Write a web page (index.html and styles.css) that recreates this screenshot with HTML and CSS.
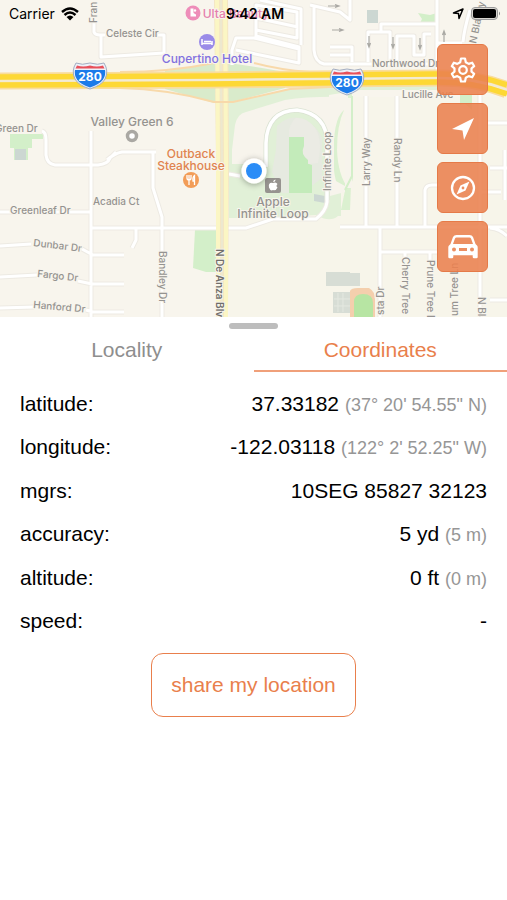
FILE: index.html
```html
<!DOCTYPE html>
<html lang="en">
<head>
<meta charset="utf-8">
<meta name="viewport" content="width=device-width, initial-scale=1">
<title>My location</title>
<link rel="stylesheet" href="styles.css">
</head>
<body>
<main class="app">
  <section class="map" aria-label="Map">
    <svg class="map-canvas" viewBox="0 0 507 317" preserveAspectRatio="xMidYMid slice">
      <defs>
        <filter id="shadow" x="-50%" y="-50%" width="200%" height="200%">
          <feDropShadow dx="0" dy="1" stdDeviation="3" flood-color="#000" flood-opacity=".35"/>
        </filter>
        <g id="shield">
          <path d="M-14-13Q-8-10.500 0-13Q8-10.500 14-13Q19-5 15 3Q12 9 0 13Q-12 9-15 3Q-19-5-14-13Z" fill="#eef1f8" stroke="#a3adc2" stroke-width="1"/>
          <path d="M-13-10.500Q-7-8.500 0-10.500Q7-8.500 13-10.500L14.500-7.500H-14.500Z" fill="#e8505a"/>
          <path d="M-15-6H15Q16-1 13 3.500Q10 8 0 11.500Q-10 8-13 3.500Q-16-1-15-6Z" fill="#1b7bea"/>
          <text class="shield-text" x="0" y="5">280</text>
        </g>
        <g id="walk-arrow"><path d="M-6 0H4M1-1.500L5 0L1 1.500" fill="none" stroke="#aaa9a4" stroke-width="1.200"/></g>
      </defs>
      <rect width="507" height="317" fill="#f8f5ed"/>
      <path d="M229 97H507V317H229Z" fill="#f7f5ea"/>

      <!-- parks and verges -->
      <g fill="#d3efc9">
        <path d="M10 134H43V139H32V148H28V160H14V148H10Z"/>
        <path d="M165 71Q190 67 216 63H229L262 68L285 72V88L228 103H214L165 89Z" fill="#d9ebcb"/>
        <path d="M228 103L290 89L350 86H437V90H360L329 95V188H341V216H338Q330 223 316 215L300 216L262 218H229Z" fill="#e1f0d7"/>
        <path d="M195 230H216V272H206L193 268Z"/>
        <path d="M418 13L430 15L437 13V24L430 22L419 25L422 19Z"/>
        <path d="M460 94H472V110L465 104L460 105Z"/>
        <path d="M348 93H352V160L350 210H341L348 176Z" opacity=".8"/>
        <path d="M340 108Q334 118 333 135V160Q335 188 342 192Q354 186 353 174Q346 172 348 188Q338 175 337 150Q337 125 344 110Z" opacity=".8"/>
      </g>
      <path d="M235 125Q237 114 246 112L285 100Q310 96 348 97L349 108Q336 110 334 140V180L345 186V192L330 196V150Q326 112 297 110Q270 112 266 140V164H232V150Z" fill="#f7f4ec"/>
      <path d="M345 98H352V188H345Z" fill="#f7f4ec"/>
      <path d="M352 96V176L345 190" fill="none" stroke="#d3efc9" stroke-width="2"/>
      <path d="M277 126Q290 113 306 120Q318 128 322 138V178Q312 186 302 193H282L272 172L276 150Z" fill="#e6eae0"/>
      <path d="M289 136H304V146H309V164L312 165V193H289Z" fill="#c3ebba"/>
      <path d="M296 118Q307 117 315 128Q323 139 318 163L308 164V160Q300 154 304 146V137H289Q288 124 296 118Z" fill="#ebebe4"/>
      <path d="M350 291Q351 288 358 288H369Q375 291 375 300V317H350Z" fill="#f4cfad"/>
      <path d="M354 317V302Q354 294 363 294Q373 294 373 303V317Z" fill="#b7e5a3"/>
      <g fill="#d7ddd5">
        <path d="M15 149H26V160H15ZM367 10H378V23H367ZM314 194L325 196V203L314 201Z" fill="#ccd7d2"/>
        <path d="M326 272H350V273H360V286H326ZM333 292H350V313H333Z"/>
        <path d="M338 293V312M343 293V312M334 299H350M334 306H350" stroke="#e4e8e0" stroke-width="1"/>
      </g>

      <!-- side streets -->
      <g class="street-edge">
        <path id="roads" d="M94 20V32Q95 35 100 35H105M101 35V57L164 53V35H158M91 131V317M0 212H91M91 228H246L273 219H316Q326 211 327 202V190M42 131Q46 132 46 140V155Q47 164 55 165H98Q108 164 110 158L116 152M107 160Q115 153 122 152H156M153 153V188L162 217V317M136 228V240L132 248M0 246L31 244M82 249L93 255H124M0 277L37 275M78 281L92 284H124M0 308L34 307M86 310L93 312H124M229 174L240 176M340 227H507M366 96V227M397 96V227M380 227V317M380 252H438M405 252V260M430 252V260M425 227V190Q426 185 432 185H440M480 77V317M488 123H507M490 168H507M480 192H501M490 228Q500 229 507 236M490 300H507M505 150V200M470 10Q464 30 463 42"/>
        <path id="roads-north" d="M232 65V50L236 38H254L299 49V61M236 50L299 63V47L256 36V5L297 12V38L256 30M256 18L298 27M260 0L301 9V45M310 5L340 12L350 20V0M314 6V50Q315 62 324 64H432M330 47H352V62M330 55H352M368 62V32H390V62M381 32V24H437V0M397 62V36H414V55H424V34H431M437 13V70M462 43H437"/>
      </g>
      <use href="#roads" class="street"/>
      <use href="#roads-north" class="street"/>
      <path d="M266 167V143Q267 111 297 110Q327 114 327 143V200" fill="none" stroke="#dbe3d3" stroke-width="5"/>
      <path d="M266 167V143Q267 111 297 110Q327 114 327 143V200" fill="none" stroke="#fff" stroke-width="3.500"/>
      <g>
        <use href="#walk-arrow" x="334" y="6"/><use href="#walk-arrow" x="338" y="30"/>
        <use href="#walk-arrow" transform="translate(369 42) rotate(90)"/>
        <use href="#walk-arrow" transform="translate(393 43) rotate(90)"/>
        <use href="#walk-arrow" transform="translate(420 44) rotate(90)"/>
        <use href="#walk-arrow" transform="translate(444 36) rotate(-90)"/>
      </g>

      <!-- De Anza Blvd -->
      <path d="M214 0L216 155L216 317H228L229 155L228 0Z" fill="#f4e6c3"/>
      <path d="M217 0L218 155L218 317M225 0L226 155L226 317" fill="none" stroke="#fbf6c4" stroke-width="4"/>
      <path d="M221 0V90L222 155V317" fill="none" stroke="#ede8cf" stroke-width="2"/>

      <!-- Interstate 280 with ramps -->
      <path d="M120 72Q170 72 214 63M120 88Q168 89 214 102H233L290 89L350 86M254 63Q280 70 310 72" fill="none" stroke="#f8d9aa" stroke-width="2"/>
      <g fill="none">
        <path d="M0 81L210 80L437 78Q475 77 507 90" stroke="#f9dc9c" stroke-width="17"/>
        <path d="M0 81L210 80L437 78Q475 77 507 90" stroke="#f3ead2" stroke-width="3"/>
        <path d="M0 77L210 76L437 74Q475 73 507 85M0 85L210 84L437 82Q475 82 507 94" stroke="#fdd835" stroke-width="5.500"/>
      </g>
      <use href="#shield" x="90" y="76"/>
      <use href="#shield" x="347" y="82"/>

      <!-- street names -->
      <g class="road-name">
        <text x="106" y="37">Celeste Cir</text>
        <text x="-5" y="132">Green Dr</text>
        <text x="10" y="214">Greenleaf Dr</text>
        <text x="93" y="205">Acadia Ct</text>
        <text transform="translate(33 246) rotate(7)">Dunbar Dr</text>
        <text transform="translate(37 277) rotate(6)">Fargo Dr</text>
        <text transform="translate(33 308) rotate(5)">Hanford Dr</text>
        <text x="372" y="67">Northwood Dr</text>
        <text x="402" y="98">Lucille Ave</text>
        <text transform="translate(97 23) rotate(-90)">Fran</text>
        <text transform="translate(159 251) rotate(90)">Bandley Dr</text>
        <text transform="translate(331 191) rotate(-90)">Infinite Loop</text>
        <text transform="translate(370 186) rotate(-90)">Larry Way</text>
        <text transform="translate(394 138) rotate(90)">Randy Ln</text>
        <text transform="translate(402 257) rotate(90)">Cherry Tree</text>
        <text transform="translate(427 260) rotate(90)">Prune Tree Ln</text>
        <text transform="translate(458 316) rotate(-90)">um Tree Ln</text>
        <text transform="translate(384 315) rotate(-90)">sta Dr</text>
        <text transform="translate(478 297) rotate(90)">N Blaney</text>
        <text transform="translate(476 44) rotate(-78)">N Blaney</text>
        <text class="major" transform="translate(216 249) rotate(90)">N De Anza Blvd</text>
      </g>

      <!-- places -->
      <g class="place">
        <text x="132" y="126">Valley Green 6</text>
        <text x="273" y="206">Apple</text>
        <text x="273" y="218">Infinite Loop</text>
        <text class="food" x="191" y="158">Outback</text>
        <text class="food" x="191" y="170">Steakhouse</text>
        <text class="hotel" x="207" y="63">Cupertino Hotel</text>
        <text class="shop" x="236" y="18">Ulta Beauty</text>
      </g>
      <circle cx="132" cy="136" r="4.500" fill="#fff" stroke="#aaa8a3" stroke-width="3.500"/>
      <circle cx="193" cy="13" r="7.500" fill="#ee8db9"/>
      <path d="M190.500 8.500V16.500H196V14.500L193.500 13V8.500Z" fill="#fff"/>
      <circle cx="195" cy="10.500" r="1.200" fill="#fff"/>
      <circle cx="207" cy="42" r="8" fill="#9a8be8"/>
      <path d="M202 39V45M202 43.500H212M212 41V45M204 41.500H211" stroke="#fff" stroke-width="1.500"/>
      <circle cx="191" cy="180" r="8" fill="#f29d58"/>
      <path d="M187 175V178Q187 180 189 180Q191 180 191 178V175M189 175V185M194.500 185V175.500Q192.500 177 193 181H194.500" fill="none" stroke="#fff" stroke-width="1.300"/>
      <rect x="265" y="178" width="16" height="15" rx="2" fill="#96938f"/>
      <path d="M273 182Q273.500 179.500 275.500 179.500Q275.500 182 273 182ZM273 183Q276 181.500 277.500 184Q275.500 186 277.500 187.500Q276 191 273 190Q270.500 191.500 269 187.500Q268 182 273 183Z" fill="#fff"/>
      <circle cx="254" cy="171" r="12.500" fill="#fff" filter="url(#shadow)"/>
      <circle cx="254" cy="171" r="8" fill="#2b8df7"/>
    </svg>

    <header class="status">
      <div class="carrier">
        <span>Carrier</span>
        <svg width="18" height="14" viewBox="0 0 18 14" aria-hidden="true">
          <path d="M1 5Q9-2 17 5M3.500 8Q9 3 14.500 8" fill="none" stroke="#000" stroke-width="2.400"/>
          <path d="M5.500 10Q9 7 12.500 10L9 13.500Z"/>
        </svg>
      </div>
      <time class="clock">9:42 AM</time>
      <div class="indicators">
        <svg width="13" height="13" viewBox="0 0 13 13" aria-hidden="true">
          <path d="M1.500 6L11 2L7 11.500L6.500 6.500Z" fill="none" stroke="#000" stroke-width="1.500" stroke-linejoin="round"/>
        </svg>
        <svg width="30" height="14" viewBox="0 0 30 14" aria-hidden="true">
          <rect x=".5" y=".5" width="26" height="12" rx="3.500" fill="#d8d6d0" stroke="#999"/>
          <rect x="2" y="2" width="23" height="9" rx="2"/>
          <path d="M28 4.500Q30 6.500 28 8.500Z" fill="#888"/>
        </svg>
      </div>
    </header>

    <nav class="tools" aria-label="Map tools">
      <button class="tool" type="button" aria-label="Settings">
        <svg viewBox="0 0 32 32" aria-hidden="true" fill="none" stroke="#fff" stroke-width="2.200" stroke-linejoin="round">
          <path d="M14 4.500H18L18.800 8.200L21.700 9.900L25.200 8.700L27.200 12.200L24.500 14.300V17.700L27.200 19.800L25.200 23.300L21.700 22.100L18.800 23.800L18 27.500H14L13.200 23.800L10.300 22.100L6.800 23.300L4.800 19.800L7.500 17.700V14.300L4.800 12.200L6.800 8.700L10.300 9.900L13.200 8.200Z"/>
          <circle cx="16" cy="16" r="3.800"/>
        </svg>
      </button>
      <button class="tool" type="button" aria-label="Center on my location">
        <svg viewBox="0 0 32 32" aria-hidden="true"><path d="M27 5L17 27L15.500 17.500L5 16Z" fill="#fff"/></svg>
      </button>
      <button class="tool" type="button" aria-label="Compass">
        <svg viewBox="0 0 32 32" aria-hidden="true">
          <circle cx="16" cy="16" r="11" fill="none" stroke="#fff" stroke-width="2.300"/>
          <path fill-rule="evenodd" d="M22.500 9.500L18.500 18.500L9.500 22.500L13.500 13.500ZM16 14.600A1.400 1.400 0 1 0 16 17.400A1.400 1.400 0 1 0 16 14.600Z" fill="#fff"/>
        </svg>
      </button>
      <button class="tool" type="button" aria-label="Directions">
        <svg viewBox="0 0 32 32" aria-hidden="true">
          <path fill-rule="evenodd" d="M9.500 4H22.500Q25 4 26 6L28.500 13L30 14.500Q30.700 15 30.700 16.500V26Q30.700 27.300 29.400 27.300H27Q25.700 27.300 25.700 26V24.300H6.300V26Q6.300 27.300 5 27.300H2.600Q1.300 27.300 1.300 26V16.500Q1.300 15 2 14.500L3.500 13L6 6Q7 4 9.500 4ZM9.500 6.500Q8.500 6.500 8 7.500L6 13H26L24 7.500Q23.500 6.500 22.500 6.500ZM7 16.500A2 2 0 1 0 7 20.500A2 2 0 1 0 7 16.500ZM25 16.500A2 2 0 1 0 25 20.500A2 2 0 1 0 25 16.500ZM12 17V20H20V17Z" fill="#fff"/>
        </svg>
      </button>
    </nav>
  </section>

  <section class="panel">
    <div class="handle"></div>
    <div class="tabs" role="tablist">
      <button class="tab" type="button" role="tab" aria-selected="false">Locality</button>
      <button class="tab active" type="button" role="tab" aria-selected="true">Coordinates</button>
    </div>
    <table class="readings">
      <tbody>
        <tr><th scope="row">latitude:</th><td>37.33182 <small>(37° 20' 54.55" N)</small></td></tr>
        <tr><th scope="row">longitude:</th><td>-122.03118 <small>(122° 2' 52.25" W)</small></td></tr>
        <tr><th scope="row">mgrs:</th><td>10SEG 85827 32123</td></tr>
        <tr><th scope="row">accuracy:</th><td>5 yd <small>(5 m)</small></td></tr>
        <tr><th scope="row">altitude:</th><td>0 ft <small>(0 m)</small></td></tr>
        <tr><th scope="row">speed:</th><td>-</td></tr>
      </tbody>
    </table>
    <button class="share" type="button">share my location</button>
  </section>
</main>
</body>
</html>
```
FILE: styles.css
```css
* {
  box-sizing: border-box;
}

body {
  margin: 0;
  background: #fff;
  color: #000;
  font-family: "Liberation Sans", Arial, sans-serif;
  font-size: 21px;
}

button {
  margin: 0;
  font: inherit;
  cursor: pointer;
}

.app {
  display: flex;
  flex-direction: column;
  min-height: 100vh;
}

/* Map */
.map {
  position: relative;
  overflow: hidden;
}

.map-canvas {
  display: block;
  width: 100%;
  aspect-ratio: 507 / 317;
  font-family: Inter, sans-serif;
}

.street,
.street-edge {
  fill: none;
  stroke: #fff;
  stroke-width: 3px;
  stroke-linejoin: round;
}

.street-edge {
  stroke: #edeae3;
  stroke-width: 5px;
}

.road-name,
.place {
  fill: #959390;
  stroke: #f8f5ed;
  stroke-width: 2px;
  paint-order: stroke;
  font-size: 10px;
  font-weight: 500;
}

.road-name .major {
  fill: #706e6a;
  font-weight: 600;
}

.place {
  font-size: 12px;
  font-weight: 500;
  text-anchor: middle;
}

.place .food {
  fill: #e08450;
}

.place .hotel {
  fill: #8171df;
}

.place .shop {
  fill: #e57fae;
}

.shield-text {
  fill: #fff;
  stroke: none;
  font-size: 12px;
  font-weight: 700;
  text-anchor: middle;
}

/* Status bar, laid over the map */
.status {
  position: absolute;
  inset: 0 0 auto;
  display: grid;
  grid-template-columns: 1fr auto 1fr;
  align-items: center;
  height: 27px;
  padding: 0 6px 0 9px;
  font-family: Inter, sans-serif;
  font-size: 14px;
}

.carrier,
.indicators {
  display: flex;
  align-items: center;
  gap: 6px;
}

.indicators {
  justify-content: flex-end;
}

.clock {
  font-weight: 600;
}

/* Floating map tools */
.tools {
  position: absolute;
  top: 44px;
  right: 19px;
  display: flex;
  flex-direction: column;
  gap: 8px;
}

.tool {
  display: grid;
  place-items: center;
  width: 51px;
  height: 51px;
  padding: 0;
  border: 1px solid #e57a48;
  border-radius: 6px;
  background: rgba(235, 129, 78, 0.88);
}

.tool svg {
  width: 32px;
  height: 32px;
}

/* Detail panel */
.panel {
  display: flex;
  flex-direction: column;
  padding-top: 6px;
}

.handle {
  align-self: center;
  width: 49px;
  height: 6px;
  border-radius: 3px;
  background: #bdbdbd;
}

.tabs {
  display: grid;
  grid-template-columns: 1fr 1fr;
}

.tab {
  height: 43px;
  padding: 0;
  border: 0;
  border-bottom: 2px solid transparent;
  background: none;
  color: #8e8e8e;
}

.tab.active {
  border-color: #f0a07a;
  color: #e97f4c;
}

.readings {
  height: 261px;
  margin: 10px 20px;
  border-collapse: collapse;
}

.readings th,
.readings td {
  padding: 0;
  font-weight: 400;
  text-align: left;
}

.readings td {
  text-align: right;
}

.readings small {
  color: #969696;
  font-size: 18px;
}

.share {
  align-self: center;
  height: 64px;
  padding: 0 19px;
  border: 1px solid #e97f4c;
  border-radius: 12px;
  background: #fff;
  color: #e97f4c;
}
```
